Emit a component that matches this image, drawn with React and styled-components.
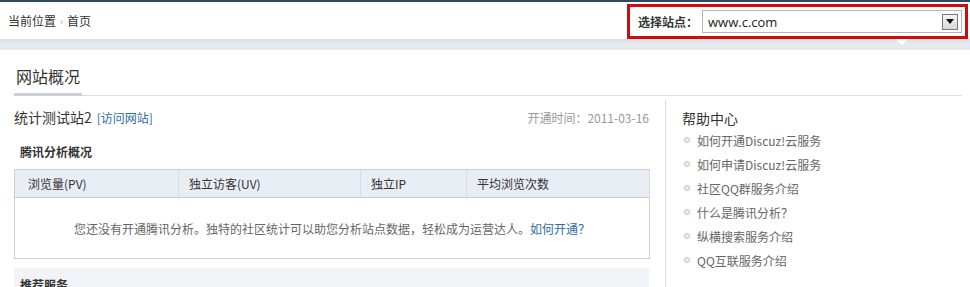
import styled, { createGlobalStyle } from "styled-components";

const GlobalStyle = createGlobalStyle`
  html, body {
    margin: 0;
    padding: 0;
    background: #fff;
  }
  body {
    font-family: "Noto Sans CJK SC", "Noto Sans", sans-serif;
    font-size: 12px;
    color: #333;
  }
  a {
    color: #2b6ca3;
    text-decoration: none;
  }
`;

const TopBar = styled.header`
  border-top: 2px solid #2c4a5f;
  height: 37px;
  display: flex;
  align-items: center;
  justify-content: space-between;
  padding-left: 8px;
  padding-right: 2px;
  background: #fff;
`;

const Crumb = styled.div`
  display: flex;
  align-items: center;
  gap: 4px;
  font-size: 12px;
  color: #333;
  span.sep {
    color: #aaa;
    font-size: 10px;
  }
`;

const SiteBox = styled.div`
  box-sizing: border-box;
  width: 341px;
  height: 35px;
  margin-top: 2px;
  border: 3px solid #d20a0a;
  display: flex;
  align-items: center;
  padding: 0 3px 0 8px;
  gap: 4px;
  label {
    white-space: nowrap;
    flex-shrink: 0;
    font-weight: bold;
    font-size: 12px;
    color: #333;
  }
`;

const Select = styled.div`
  box-sizing: border-box;
  flex: 1;
  height: 23px;
  border: 1px solid #b5b5b5;
  display: flex;
  align-items: center;
  justify-content: space-between;
  padding: 0 3px 0 5px;
  font-size: 13px;
  color: #222;
  font-family: "Open Sans", "Noto Sans", sans-serif;
`;

const DropButton = styled.span`
  box-sizing: border-box;
  width: 16px;
  height: 16px;
  border: 1px solid #7a7a7a;
  background: linear-gradient(#f4f4f4, #d8d8d8);
  display: flex;
  align-items: center;
  justify-content: center;
  &::after {
    content: "";
    border-left: 4px solid transparent;
    border-right: 4px solid transparent;
    border-top: 5px solid #111;
  }
`;

const Band = styled.div`
  position: relative;
  height: 11px;
  background: linear-gradient(#d9dee5, #e6e9ee 4px);
  &::after {
    content: "";
    position: absolute;
    left: 896px;
    top: 0;
    border-left: 6px solid transparent;
    border-right: 6px solid transparent;
    border-top: 6px solid #fff;
  }
`;

const Main = styled.main`
  padding: 0 8px 0 14px;
`;

const PageTitle = styled.h1`
  margin: 0;
  border-bottom: 1px solid #dcdcdc;
  height: 45px;
  display: flex;
  align-items: flex-end;
  span {
    display: block;
    font-size: 16px;
    font-weight: normal;
    color: #333;
    padding: 0 2px 6px 2px;
    width: 64px;
    line-height: 22px;
    border-bottom: 3px solid #c9d0dd;
    margin-bottom: -1px;
  }
`;

const Columns = styled.div`
  display: grid;
  grid-template-columns: 635px 1fr;
  column-gap: 16px;
`;

const Left = styled.section`
  padding-top: 11px;
`;

const SiteRow = styled.div`
  display: flex;
  align-items: center;
  justify-content: space-between;
  height: 20px;
`;

const SiteName = styled.div`
  display: flex;
  align-items: baseline;
  gap: 5px;
  font-size: 14px;
  color: #333;
  a {
    font-size: 12px;
  }
`;

const OpenTime = styled.div`
  color: #999;
  font-size: 12px;
`;

const SubTitle = styled.h3`
  margin: 0;
  padding: 16px 0 0 6px;
  height: 26px;
  font-size: 12px;
  font-weight: bold;
  color: #333;
  line-height: 18px;
  box-sizing: content-box;
`;

const Table = styled.table`
  width: 635px;
  table-layout: fixed;
  border-collapse: collapse;
  border: 1px solid #c8cfda;
  th {
    background: #e9edf4;
    border-bottom: 1px solid #c8cfda;
    border-right: 1px solid #d7dde6;
    height: 27px;
    text-align: left;
    font-weight: normal;
    font-size: 12px;
    color: #333;
    padding: 0 0 0 10px;
  }
  th:first-child {
    padding-left: 13px;
  }
  td {
    height: 60px;
    text-align: center;
    color: #666;
    font-size: 12px;
    padding: 0;
  }
`;

const Recommend = styled.div`
  margin-top: 9px;
  background: #f1f3f7;
  height: 30px;
  padding: 8px 0 0 6px;
  box-sizing: border-box;
  font-weight: bold;
  font-size: 12px;
  color: #333;
`;

const Side = styled.aside`
  border-left: 1px solid #dcdcdc;
  margin-top: 4px;
  padding: 8px 0 0 16px;
  min-height: 200px;
`;

const SideTitle = styled.h2`
  margin: 0;
  font-size: 14px;
  font-weight: normal;
  color: #333;
  line-height: 20px;
`;

const HelpList = styled.ul`
  list-style: none;
  margin: 0;
  padding: 0;
  li {
    display: flex;
    align-items: center;
    gap: 7px;
    height: 24px;
    font-size: 12px;
    color: #666;
  }
  li::before {
    content: "";
    box-sizing: border-box;
    width: 6px;
    height: 6px;
    margin-left: 2px;
    border-radius: 50%;
    border: 1px solid #c4c4c4;
    background: #ececec;
  }
`;

const helpItems = [
  "如何开通Discuz!云服务",
  "如何申请Discuz!云服务",
  "社区QQ群服务介绍",
  "什么是腾讯分析？",
  "纵横搜索服务介绍",
  "QQ互联服务介绍",
];

const columns = [
  { label: "浏览量(PV)", width: 164 },
  { label: "独立访客(UV)", width: 182 },
  { label: "独立IP", width: 106 },
  { label: "平均浏览次数", width: 183 },
];

const App = () => {
  return (
    <>
      <GlobalStyle />
      <TopBar>
        <Crumb>
          <span>当前位置</span>
          <span className="sep">›</span>
          <span>首页</span>
        </Crumb>
        <SiteBox>
          <label>选择站点：</label>
          <Select>
            <span>www.c.com</span>
            <DropButton />
          </Select>
        </SiteBox>
      </TopBar>
      <Band />
      <Main>
        <PageTitle>
          <span>网站概况</span>
        </PageTitle>
        <Columns>
          <Left>
            <SiteRow>
              <SiteName>
                统计测试站2 <a href="#">[访问网站]</a>
              </SiteName>
              <OpenTime>开通时间：2011-03-16</OpenTime>
            </SiteRow>
            <SubTitle>腾讯分析概况</SubTitle>
            <Table>
              <colgroup>
                {columns.map((col) => (
                  <col key={col.label} style={{ width: col.width }} />
                ))}
              </colgroup>
              <thead>
                <tr>
                  {columns.map((col) => (
                    <th key={col.label}>{col.label}</th>
                  ))}
                </tr>
              </thead>
              <tbody>
                <tr>
                  <td colSpan={4}>
                    您还没有开通腾讯分析。独特的社区统计可以助您分析站点数据，轻松成为运营达人。
                    <a href="#">如何开通？</a>
                  </td>
                </tr>
              </tbody>
            </Table>
            <Recommend>推荐服务</Recommend>
          </Left>
          <Side>
            <SideTitle>帮助中心</SideTitle>
            <HelpList>
              {helpItems.map((item) => (
                <li key={item}>{item}</li>
              ))}
            </HelpList>
          </Side>
        </Columns>
      </Main>
    </>
  );
};

export default App;
